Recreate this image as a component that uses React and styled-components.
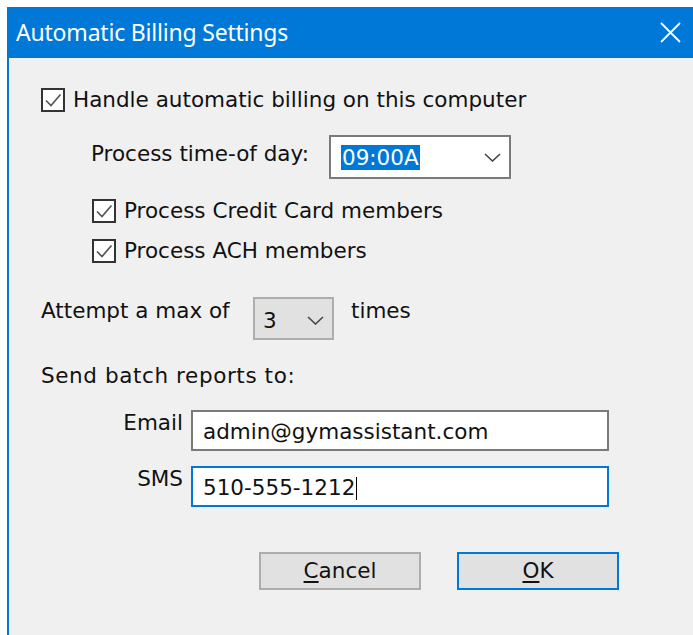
import React from "react";
import styled, { createGlobalStyle } from "styled-components";

const GlobalStyle = createGlobalStyle`
  html, body {
    margin: 0;
    padding: 0;
    background: #fff;
  }
  body {
    font-family: "DejaVu Sans", "Liberation Sans", sans-serif;
    color: #111;
  }
`;

const blue = "#0078d7";

const Page = styled.div`
  padding: 7px 0 0 7px;
  height: 635px;
  box-sizing: border-box;
  overflow: hidden;
`;

const Window = styled.div`
  display: flex;
  flex-direction: column;
  height: 100%;
  background: ${blue};
`;

const TitleBar = styled.div`
  display: flex;
  align-items: center;
  justify-content: space-between;
  height: 51px;
  padding: 0 12px 0 9px;
  color: #fff;
  font-family: "Noto Sans", "Open Sans", sans-serif;
  font-size: 23px;
`;

const Title = styled.span`
  letter-spacing: -0.2px;
  margin-top: -2px;
`;

const Body = styled.div`
  flex: 1;
  margin-left: 2px;
  background: #f0f0f0;
  padding: 28px 0 0 32px;
  display: flex;
  flex-direction: column;
  font-size: 21.5px;
  line-height: 28px;
`;

const CheckRow = styled.label`
  display: flex;
  align-items: center;
  gap: 8px;
  height: 28px;
  margin-top: ${p => p.top || 0}px;
  padding-left: ${p => p.indent || 0}px;
`;

const Box = styled.span`
  width: 24px;
  height: 24px;
  box-sizing: border-box;
  border: 2px solid #333;
  background: #fff;
  display: flex;
  align-items: center;
  justify-content: center;
`;

const Row = styled.div`
  display: flex;
  align-items: ${p => p.align || "center"};
  margin-top: ${p => p.top || 0}px;
  padding-left: ${p => p.indent || 0}px;
  gap: ${p => p.gap || 0}px;
`;

const Label = styled.span`
  width: ${p => (p.width ? `${p.width}px` : "auto")};
  white-space: nowrap;
  margin-top: ${p => p.shift || 0}px;
  letter-spacing: ${p => p.spread || 0}px;
`;

const Select = styled.div`
  display: flex;
  align-items: center;
  justify-content: space-between;
  box-sizing: border-box;
  width: ${p => p.width}px;
  height: ${p => p.height}px;
  border: 2px solid ${p => (p.flat ? "#adadad" : "#7a7a7a")};
  background: ${p => (p.flat ? "#e1e1e1" : "#fff")};
  padding: ${p => (p.flat ? "4px 8px 0 8px" : "0 8px 0 10px")};
`;

const Selected = styled.span`
  background: ${blue};
  color: #fff;
  line-height: 25px;
  padding: 0 1px;
`;

const Fields = styled.div`
  display: grid;
  grid-template-columns: 142px 418px;
  column-gap: 8px;
  row-gap: 15px;
  margin-top: 20px;
`;

const FieldLabel = styled.span`
  text-align: right;
  align-self: start;
  margin-top: -1px;
`;

const Input = styled.div`
  display: flex;
  align-items: center;
  box-sizing: border-box;
  height: 41px;
  border: 2px solid ${p => (p.focused ? blue : "#7a7a7a")};
  background: #fff;
  padding: 3px 10px 0;
`;

const Caret = styled.span`
  display: inline-block;
  width: 1px;
  height: 23px;
  background: #000;
  margin-left: 1px;
`;

const Buttons = styled.div`
  display: flex;
  gap: 36px;
  margin-top: 45px;
  padding-left: 218px;
`;

const Button = styled.button`
  width: 162px;
  height: 38px;
  box-sizing: border-box;
  background: #e1e1e1;
  border: 2px solid ${p => (p.primary ? blue : "#adadad")};
  font: inherit;
  font-size: 21.5px;
  color: #111;
  padding: 0;
  u {
    text-decoration-thickness: 2px;
    text-underline-offset: 3px;
  }
`;

const CheckMark = () => (
  <svg width="20" height="20" viewBox="0 0 20 20">
    <path d="M3 10.5 L8 15.5 L17.5 4.5" fill="none" stroke="#555" strokeWidth="1.7" />
  </svg>
);

const Chevron = () => (
  <svg width="17" height="9" viewBox="0 0 17 9">
    <path d="M1 1 L8.5 8 L16 1" fill="none" stroke="#444" strokeWidth="1.6" />
  </svg>
);

const CloseIcon = () => (
  <svg width="21" height="21" viewBox="0 0 21 21">
    <path d="M1 1 L20 20 M20 1 L1 20" stroke="#fff" strokeWidth="1.8" />
  </svg>
);

const Check = ({ children, top, indent }) => (
  <CheckRow top={top} indent={indent}>
    <Box>
      <CheckMark />
    </Box>
    {children}
  </CheckRow>
);

export default function App() {
  return (
    <>
      <GlobalStyle />
      <Page>
        <Window>
          <TitleBar>
            <Title>Automatic Billing Settings</Title>
            <CloseIcon />
          </TitleBar>
          <Body>
            <Check>Handle automatic billing on this computer</Check>

            <Row top={21} indent={50}>
              <Label width={238} shift={-6}>Process time-of day:</Label>
              <Select width={182} height={44}>
                <Selected>09:00A</Selected>
                <Chevron />
              </Select>
            </Row>

            <Check top={18} indent={51}>Process Credit Card members</Check>
            <Check top={12} indent={51}>Process ACH members</Check>

            <Row top={32} gap={17} align="flex-start">
              <Label width={195}>Attempt a max of</Label>
              <Select width={81} height={43} flat>
                <span>3</span>
                <Chevron />
              </Select>
              <Label>times</Label>
            </Row>

            <Row top={22}>
              <Label spread={0.6}>Send batch reports to:</Label>
            </Row>

            <Fields>
              <FieldLabel>Email</FieldLabel>
              <Input>admin@gymassistant.com</Input>
              <FieldLabel>SMS</FieldLabel>
              <Input focused>
                510-555-1212
                <Caret />
              </Input>
            </Fields>

            <Buttons>
              <Button>
                <u>C</u>ancel
              </Button>
              <Button primary>
                <u>O</u>K
              </Button>
            </Buttons>
          </Body>
        </Window>
      </Page>
    </>
  );
}
